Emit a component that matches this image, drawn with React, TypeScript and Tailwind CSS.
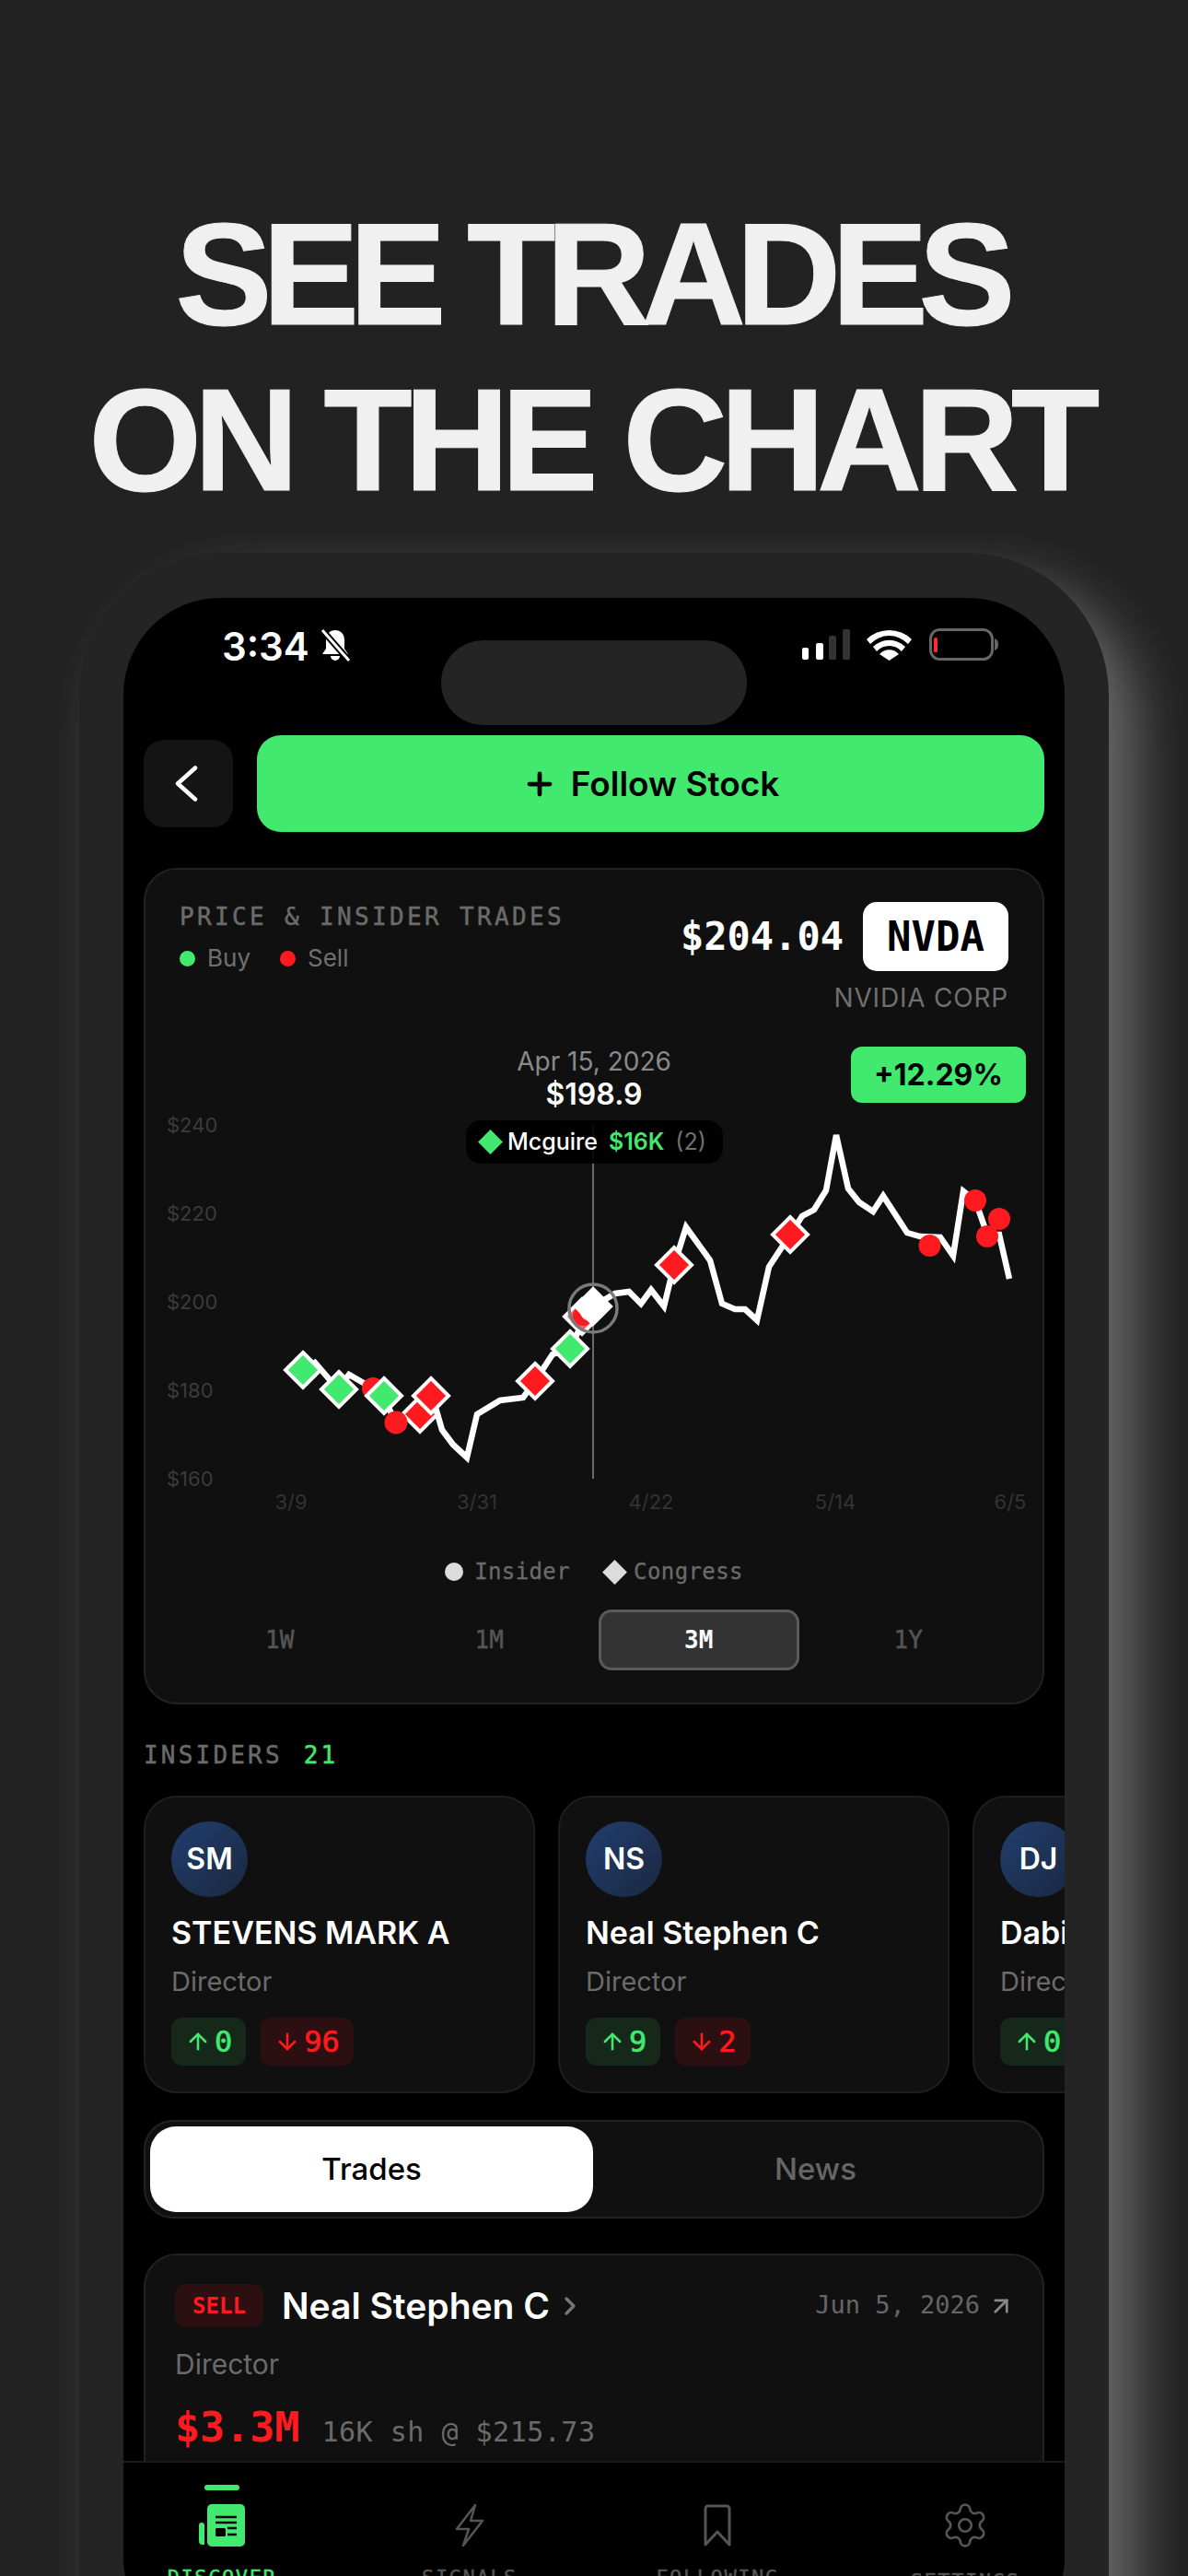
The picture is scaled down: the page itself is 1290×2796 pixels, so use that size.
import React from 'react';
import { ArrowDown, ArrowUp, ArrowUpRight, ChevronRight, Plus, Settings } from 'lucide-react';

const mono = "font-['DejaVu_Sans_Mono',monospace]";

// page coordinates, the svg viewBox below lines up with them
const pricePath = [
  [318, 1496], [342, 1479], [367, 1508], [379, 1492], [405, 1507], [423, 1530], [430, 1544], [456, 1535],
  [473, 1528], [480, 1552], [492, 1568], [507, 1582], [518, 1535], [543, 1520], [568, 1517], [581, 1499],
  [600, 1470], [619, 1464], [627, 1447], [644, 1418], [668, 1404], [683, 1402], [696, 1415], [707, 1400],
  [721, 1418], [732, 1373], [745, 1332], [771, 1368], [784, 1415], [798, 1421], [809, 1421], [822, 1433],
  [835, 1375], [858, 1340], [871, 1320], [884, 1313], [897, 1292], [908, 1232], [921, 1290], [933, 1305],
  [948, 1315], [959, 1298], [985, 1338], [999, 1342], [1021, 1343], [1035, 1363], [1046, 1293], [1059, 1303],
  [1072, 1340], [1085, 1340], [1096, 1388],
];

const yLabels = [
  { label: '$240', y: 1221 },
  { label: '$220', y: 1317 },
  { label: '$200', y: 1413 },
  { label: '$180', y: 1509 },
  { label: '$160', y: 1605 },
];

const xLabels = [
  { label: '3/9', x: 316 },
  { label: '3/31', x: 518 },
  { label: '4/22', x: 707 },
  { label: '5/14', x: 907 },
  { label: '6/5', x: 1097 },
];

const GREEN = '#41e96f';
const RED = '#ff1a1f';

function Diamond({ x, y, fill, r = 19 }: { x: number; y: number; fill: string; r?: number }) {
  return (
    <polygon
      points={`${x},${y - r} ${x + r},${y} ${x},${y + r} ${x - r},${y}`}
      fill={fill}
      stroke="#fff"
      strokeWidth={4}
      strokeLinejoin="miter"
    />
  );
}

function PriceChart() {
  return (
    <svg viewBox="158 1110 974 540" width={974} height={540} className="block">
      {yLabels.map((l) => (
        <text key={l.label} x={181} y={l.y + 8} className="fill-[#3b3b3b] text-[22px] font-['Inter']">
          {l.label}
        </text>
      ))}
      {xLabels.map((l) => (
        <text key={l.label} x={l.x} y={1638} textAnchor="middle" className="fill-[#333333] text-[22px] font-['Inter']">
          {l.label}
        </text>
      ))}
      <line x1={644} y1={1220} x2={644} y2={1605} stroke="#6a6a6a" strokeWidth={2} />
      <polyline
        points={pricePath.map((p) => p.join(',')).join(' ')}
        fill="none"
        stroke="#fff"
        strokeWidth={6.5}
        strokeLinejoin="miter"
      />
      <circle cx={405} cy={1507} r={12} fill={RED} />
      <Diamond x={329} y={1487} fill={GREEN} />
      <Diamond x={368} y={1508} fill={GREEN} />
      <Diamond x={417} y={1515} fill={GREEN} />
      <Diamond x={456} y={1535} fill={RED} />
      <circle cx={430} cy={1544} r={12.5} fill={RED} />
      <Diamond x={468} y={1515} fill={RED} />
      <Diamond x={581} y={1499} fill={RED} />
      <Diamond x={619} y={1464} fill={GREEN} />
      <Diamond x={632} y={1429} fill="#ff5f63" />
      <circle cx={633} cy={1428} r={11} fill={RED} />
      <circle cx={644} cy={1420} r={26} fill="none" stroke="#7a7a7a" strokeWidth={3.5} />
      <circle cx={642} cy={1421} r={13} fill="#fff" />
      <Diamond x={644} y={1418} fill="#fff" />
      <Diamond x={732} y={1373} fill={RED} />
      <Diamond x={858} y={1340} fill={RED} />
      <circle cx={1009.5} cy={1352} r={12} fill={RED} />
      <circle cx={1059} cy={1303} r={12} fill={RED} />
      <circle cx={1072} cy={1342} r={12} fill={RED} />
      <circle cx={1085} cy={1323} r={12} fill={RED} />
    </svg>
  );
}

function ChartCard() {
  return (
    <div className="mt-[39px] rounded-[36px] border-2 border-[#222222] bg-[#101010] pb-[35px]">
      <div className="flex h-[166px] justify-between px-[37px] pt-[35px]">
        <div>
          <div className={`${mono} mt-[1px] text-[26px] leading-[30px] font-normal tracking-[3.35px] text-[#6b6b6b] [-webkit-text-stroke:0.5px]`}>
            PRICE &amp; INSIDER TRADES
          </div>
          <div className="mt-[14px] flex items-center text-[26px] leading-[32px] text-[#707070]">
            <span className="h-[17px] w-[17px] rounded-full bg-[#41e96f]" />
            <span className="ml-[13px]">Buy</span>
            <span className="ml-[32px] h-[17px] w-[17px] rounded-full bg-[#ff1a1f]" />
            <span className="ml-[13px]">Sell</span>
          </div>
        </div>
        <div className="flex flex-col items-end">
          <div className="flex items-center gap-[21px]">
            <span className={`${mono} text-[42px] leading-none font-bold text-white`}>$204.04</span>
            <span className={`${mono} flex h-[75px] w-[158px] items-center justify-center rounded-[15px] bg-white text-[44px] font-bold text-black`}>
              NVDA
            </span>
          </div>
          <div className="mt-[11px] text-[28px] leading-[36px] tracking-[0.8px] text-[#6f6f6f]">NVIDIA CORP</div>
        </div>
      </div>

      <div className="relative h-[540px]">
        <PriceChart />
        <div className="absolute top-[24px] left-[487px] -translate-x-1/2 text-center whitespace-nowrap">
          <div className="text-[28px] leading-[36px] text-[#8a8a8a]">Apr 15, 2026</div>
          <div className="mt-[-1px] text-[32px] leading-[38px] font-semibold text-white">$198.9</div>
        </div>
        <div className="absolute top-[106px] left-[348px] flex h-[47px] w-[279px] items-center rounded-[16px] bg-black/90 pl-[17px] text-[25px] whitespace-nowrap">
          <span className="h-[19px] w-[19px] rotate-45 bg-[#41e96f]" />
          <span className="ml-[9px] font-medium text-white">Mcguire</span>
          <span className="ml-[12px] font-semibold text-[#41e96f]">$16K</span>
          <span className="ml-[12px] text-[#6f6f6f]">(2)</span>
        </div>
        <div className="absolute top-[26px] left-[766px] flex h-[61px] w-[190px] items-center justify-center rounded-[12px] bg-[#41e96f] text-[32px] font-bold text-black">
          +12.29%
        </div>
      </div>

      <div className={`${mono} mt-[43px] flex h-[26px] items-center justify-center text-[24px] tracking-[0.4px] text-[#6b6b6b] [-webkit-text-stroke:0.3px]`}>
        <span className="h-[20px] w-[20px] rounded-full bg-[#dcdcdc]" />
        <span className="ml-[12px]">Insider</span>
        <span className="ml-[39px] h-[19px] w-[19px] rotate-45 bg-[#dcdcdc]" />
        <span className="ml-[11px]">Congress</span>
      </div>

      <div className={`${mono} mt-[28px] grid grid-cols-4 gap-[10px] px-[37px] text-[26px]`}>
        {['1W', '1M', '3M', '1Y'].map((t) =>
          t === '3M' ? (
            <div key={t} className="flex h-[66px] items-center justify-center rounded-[14px] border-[3px] border-[#5a5a5a] bg-[#333333] font-bold text-white">
              {t}
            </div>
          ) : (
            <div key={t} className="flex h-[66px] items-center justify-center text-[#555555] [-webkit-text-stroke:0.5px]">
              {t}
            </div>
          ),
        )}
      </div>
    </div>
  );
}

function InsiderCard({ initials, name, buys, sells }: { initials: string; name: string; buys: number; sells: number }) {
  return (
    <div className="h-[323px] w-[425px] shrink-0 rounded-[36px] border-2 border-[#1e1e1e] bg-[#101010] pt-[26px] pl-[28px]">
      <div className="flex h-[82px] w-[83px] items-center justify-center rounded-full bg-gradient-to-br from-[#213e6e] to-[#1a2840] text-[32px] font-semibold text-white">
        {initials}
      </div>
      <div className="mt-[17px] text-[34px] leading-[44px] font-semibold whitespace-nowrap text-white">{name}</div>
      <div className="mt-[13px] text-[29px] leading-[36px] whitespace-nowrap text-[#6b6b6b]">Director</div>
      <div className={`${mono} mt-[21px] flex gap-[16px] text-[32px] font-normal [-webkit-text-stroke:0.7px]`}>
        <span className="flex h-[52px] items-center gap-[4px] rounded-[12px] bg-[#16281a] px-[15px] text-[#41e96f]">
          <ArrowUp size={28} strokeWidth={2.2} />
          {buys}
        </span>
        <span className="flex h-[52px] items-center gap-[4px] rounded-[12px] bg-[#2c1011] px-[15px] text-[#ff1a1f]">
          <ArrowDown size={28} strokeWidth={2.2} />
          {sells}
        </span>
      </div>
    </div>
  );
}

function StatusBar() {
  return (
    <div className="relative h-[149px]">
      <div className="absolute top-[33px] left-[107px] text-[42px] leading-[40px] font-semibold text-white">3:34</div>
      <svg className="absolute top-[34px] left-[213px]" width={34} height={36} viewBox="0 0 34 36">
        <path d="M17 1c6 0 10 4 10 11v9l4 6H3l4-6v-9C7 5 11 1 17 1zM12 29h10a5 5 0 0 1-10 0z" fill="#fff" />
        <path d="M3 1l29 33" stroke="#000" strokeWidth={7} />
        <path d="M3 1l29 33" stroke="#fff" strokeWidth={3} />
      </svg>
      <div className="absolute top-[46px] left-[345px] h-[92px] w-[332px] rounded-[46px] bg-[#242424]" />
      <svg className="absolute top-[33px] left-[737px]" width={215} height={36} viewBox="871 682 215 36">
        <rect x={871} y={703} width={7} height={13} rx={2} fill="#fff" />
        <rect x={886} y={698} width={8} height={18} rx={2} fill="#fff" />
        <rect x={900} y={690} width={8} height={26} rx={2} fill="#333" />
        <rect x={915} y={683} width={8} height={33} rx={2} fill="#333" />
        <path d="M941 694a35 35 0 0 1 49 0l-4 5a28 28 0 0 0-41 0z" fill="#fff" />
        <path d="M948 702a25 25 0 0 1 35 0l-4 5a18 18 0 0 0-27 0z" fill="#fff" />
        <path d="M955 710a14 14 0 0 1 21 0l-10.500 7z" fill="#fff" />
        <rect x={1010.500} y={683.500} width={67} height={32} rx={10} fill="none" stroke="#666" strokeWidth={3} />
        <rect x={1014} y={692} width={4} height={16} rx={1.500} fill="#ff2a2e" />
        <path d="M1080 693c3 1 4 3 4 6.500s-1 5.500-4 6.500z" fill="#666" />
      </svg>
    </div>
  );
}

function BottomNav() {
  const label = `${mono} mt-[21px] text-[22px] leading-[26px] font-normal tracking-[1.6px] whitespace-nowrap [-webkit-text-stroke:0.4px]`;
  return (
    <div className="h-[209px] shrink-0 border-t-2 border-[#1a1a1a] bg-black">
      <div className="flex justify-between pr-[58px] pl-[57px]">
        <div className="flex w-[100px] flex-col items-center">
          <div className="mt-[24px] h-[6px] w-[38px] rounded-full bg-[#41e96f]" />
          <svg className="mt-[15px]" width={50} height={46} viewBox="0 0 50 46">
            <rect x={9} y={0} width={41} height={46} rx={5} fill="#41e96f" />
            <path d="M0 23a3 3 0 0 1 6 0v21H4a4 4 0 0 1-4-4z" fill="#41e96f" />
            <path d="M18 14h23M18 20h23M31 26h10M31 33h10" stroke="#000" strokeWidth={2.500} />
            <rect x={18} y={26} width={11} height={9} rx={1.500} fill="#000" />
          </svg>
          <div className={`${label} text-[#41e96f]`}>DISCOVER</div>
        </div>
        <div className="flex w-[100px] flex-col items-center">
          <svg className="mt-[45px]" width={34} height={46} viewBox="0 0 34 46">
            <path d="M23 1L3 27h13l-6 18 21-27H18z" fill="none" stroke="#555" strokeWidth={2.500} strokeLinejoin="round" />
          </svg>
          <div className={`${label} text-[#555555]`}>SIGNALS</div>
        </div>
        <div className="flex w-[100px] flex-col items-center">
          <svg className="mt-[45px]" width={30} height={46} viewBox="0 0 30 46">
            <path d="M2 44V5a3 3 0 0 1 3-3h20a3 3 0 0 1 3 3v39L15 30z" fill="none" stroke="#555" strokeWidth={3} strokeLinejoin="round" />
          </svg>
          <div className={`${label} text-[#555555]`}>FOLLOWING</div>
        </div>
        <div className="flex w-[100px] flex-col items-center">
          <Settings className="mt-[41px]" size={54} strokeWidth={1.2} color="#555555" />
          <div className={`${label} mt-[17px] text-[#555555]`}>SETTINGS</div>
        </div>
      </div>
    </div>
  );
}

export default function App() {
  return (
    <div className="flex h-[2796px] w-[1290px] flex-col items-center overflow-hidden bg-[#222222] font-['Inter',sans-serif]">
      <h1 className="mt-[207px] mr-[8px] text-center font-['Liberation_Sans',sans-serif] text-[158px] leading-[180px] font-bold text-[#f0f0f0] [font-kerning:none] [-webkit-text-stroke:1px_#f0f0f0]">
        <span className="block tracking-[-10.8px]">SEE TRADES</span>
        <span className="block tracking-[-8.7px]">ON THE CHART</span>
      </h1>

      <div className="mt-[33px] h-[2400px] w-[1118px] shrink-0 rounded-[155px] bg-[#242424] px-[48px] pt-[49px] shadow-[30px_30px_60px_rgba(255,255,255,0.32)]">
        <div className="flex h-[2231px] flex-col overflow-hidden rounded-[105px] bg-black">
          <StatusBar />
          <div className="min-h-0 flex-1 overflow-hidden px-[22px]">
            <div className="flex items-center gap-[26px]">
              <button className="flex h-[95px] w-[97px] items-center justify-center rounded-[22px] bg-[#141414]">
                <svg className="mr-[6px]" width={26} height={39} viewBox="0 0 26 39">
                  <path d="M23 2.500L4 19.500l19 17" fill="none" stroke="#fff" strokeWidth={4.500} strokeLinecap="round" strokeLinejoin="round" />
                </svg>
              </button>
              <button className="flex h-[105px] w-[855px] items-center justify-center gap-[15px] rounded-[26px] bg-[#41e96f] text-[37px] font-semibold text-black">
                <Plus size={38} strokeWidth={3} />
                Follow Stock
              </button>
            </div>

            <ChartCard />

            <div className={`${mono} mt-[40px] text-[26px] leading-[30px] font-normal tracking-[3.2px] text-[#6b6b6b] [-webkit-text-stroke:0.5px]`}>
              INSIDERS <span className="ml-[4px] text-[#41e96f]">21</span>
            </div>

            <div className="mt-[29px] flex gap-[25px]">
              <InsiderCard initials="SM" name="STEVENS MARK A" buys={0} sells={96} />
              <InsiderCard initials="NS" name="Neal Stephen C" buys={9} sells={2} />
              <InsiderCard initials="DJ" name="Dabiri John" buys={0} sells={4} />
            </div>

            <div className="mt-[29px] flex h-[107px] rounded-[32px] border-2 border-[#222222] bg-[#101010] p-[5px]">
              <div className="flex w-[481px] items-center justify-center rounded-[28px] bg-white text-[33px] font-medium text-black">
                Trades
              </div>
              <div className="flex flex-1 items-center justify-center text-[33px] font-medium text-[#666666]">News</div>
            </div>

            <div className="mt-[38px] h-[400px] rounded-[36px] border-2 border-[#222222] bg-[#101010] px-[32px] pt-[31px]">
              <div className="flex items-center">
                <span className={`${mono} flex h-[47px] w-[96px] items-center justify-center rounded-[12px] bg-[#2c1011] text-[24px] font-bold text-[#ff1a1f]`}>
                  SELL
                </span>
                <span className="ml-[20px] text-[39px] leading-[47px] font-semibold text-white">Neal Stephen C</span>
                <ChevronRight className="ml-[6px] text-[#777777]" size={32} strokeWidth={2.5} />
                <span className={`${mono} ml-auto text-[27px] text-[#666666]`}>Jun 5, 2026</span>
                <ArrowUpRight className="mr-[-2px] ml-[8px] text-[#888888]" size={30} strokeWidth={2.2} />
              </div>
              <div className="mt-[21px] text-[30px] leading-[38px] text-[#6b6b6b]">Director</div>
              <div className={`${mono} mt-[24px] flex items-baseline`}>
                <span className="text-[45px] leading-[52px] font-bold text-[#ff1a1f]">$3.3M</span>
                <span className="ml-[24px] text-[30px] tracking-[0.5px] text-[#6b6b6b]">16K sh @ $215.73</span>
              </div>
            </div>
          </div>
          <BottomNav />
        </div>
      </div>
    </div>
  );
}
